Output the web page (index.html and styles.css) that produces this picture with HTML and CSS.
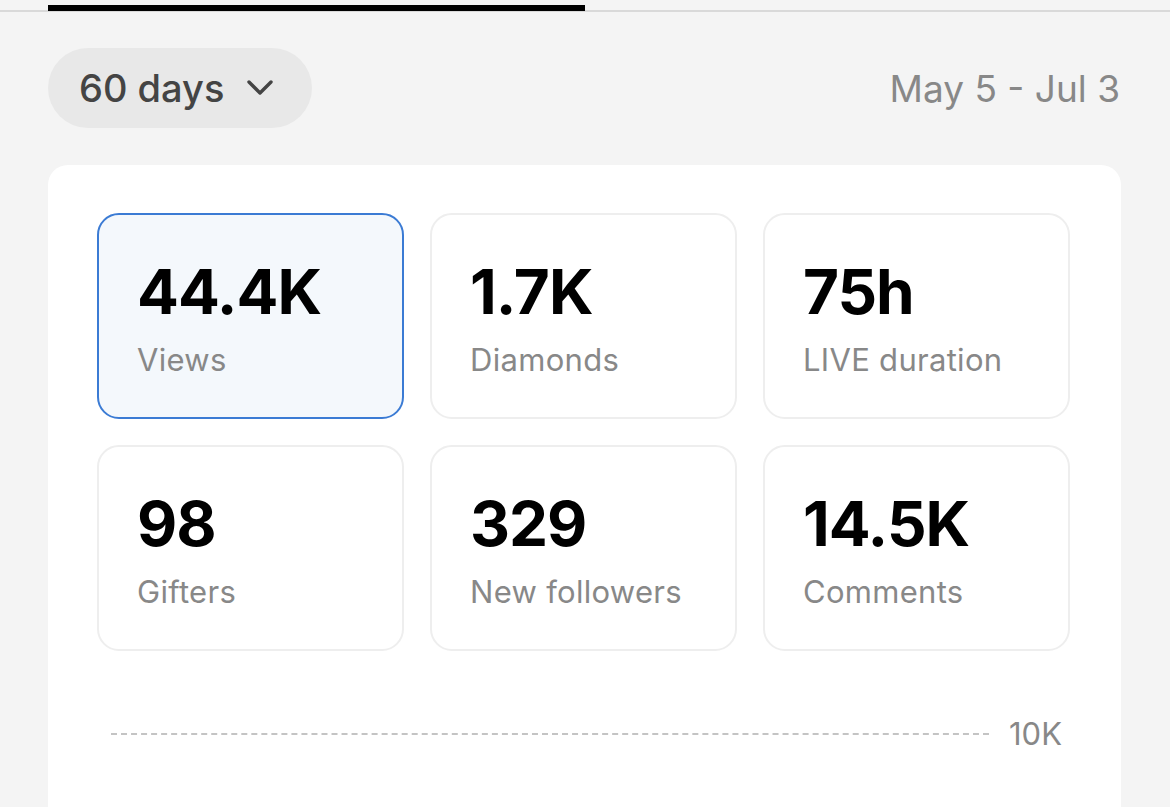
FILE: index.html
```html
<!DOCTYPE html>
<html lang="en">
<head>
  <meta charset="UTF-8">
  <meta name="viewport" content="width=device-width, initial-scale=1.0">
  <title>LIVE Analytics</title>
  <link rel="stylesheet" href="styles.css">
</head>
<body>
  <div class="tabs">
    <div class="tab-active"></div>
  </div>

  <div class="toolbar">
    <button class="range">
      60 days
      <svg width="30" height="30" viewBox="0 0 30 30"><path d="M4 9 L15 20 L26 9" fill="none" stroke="#444" stroke-width="3.4" stroke-linecap="round" stroke-linejoin="round"/></svg>
    </button>
    <span class="dates">May 5 - Jul 3</span>
  </div>

  <div class="panel">
    <div class="stats">
      <div class="stat selected">
        <div class="value">44.4K</div>
        <div class="label">Views</div>
      </div>
      <div class="stat">
        <div class="value">1.7K</div>
        <div class="label">Diamonds</div>
      </div>
      <div class="stat">
        <div class="value">75h</div>
        <div class="label">LIVE duration</div>
      </div>
      <div class="stat">
        <div class="value">98</div>
        <div class="label">Gifters</div>
      </div>
      <div class="stat">
        <div class="value">329</div>
        <div class="label">New followers</div>
      </div>
      <div class="stat">
        <div class="value">14.5K</div>
        <div class="label">Comments</div>
      </div>
    </div>

    <div class="chart">
      <div class="gridline"></div>
      <span class="axis">10K</span>
    </div>
  </div>
</body>
</html>
```
FILE: styles.css
```css
body {
  font-family: Inter, "Noto Sans", sans-serif;
  margin: 0;
  padding: 0;
  background-color: #f4f4f4;
  height: 807px;
  overflow: hidden;
}
.tabs {
  height: 10px;
  border-bottom: 2px solid #d9d9d9;
  padding: 0 48px;
  position: relative;
}
.tab-active {
  position: absolute;
  left: 48px;
  top: 5px;
  width: 537px;
  height: 6px;
  background-color: #000;
}
.toolbar {
  display: flex;
  justify-content: space-between;
  align-items: center;
  padding: 36px 50px 0 48px;
}
.range {
  display: flex;
  align-items: center;
  gap: 21px;
  height: 80px;
  padding: 0 37px 0 31px;
  border: none;
  border-radius: 40px;
  background-color: #e8e8e8;
  font-family: inherit;
  font-size: 38px;
  font-weight: 500;
  color: #444;
}
.dates {
  font-size: 37px;
  color: #888;
}
.panel {
  box-sizing: border-box;
  margin: 37px 49px 0 48px;
  background-color: #fff;
  border-radius: 20px 20px 0 0;
  padding: 48px 51px 0 49px;
  height: 642px;
}
.stats {
  display: grid;
  grid-template-columns: repeat(3, 1fr);
  gap: 26px;
}
.stat {
  box-sizing: border-box;
  height: 206px;
  border: 2px solid #eeeeee;
  border-radius: 22px;
  padding: 40px 38px 0;
}
.stat.selected {
  border-color: #3b7bd4;
  background-color: #f4f8fc;
}
.value {
  font-size: 62px;
  font-weight: 700;
  color: #000;
  letter-spacing: -1px;
  line-height: 74px;
}
.label {
  margin-top: 11px;
  font-size: 31px;
  color: #888;
  line-height: 40px;
  letter-spacing: 0.3px;
}
.chart {
  display: flex;
  align-items: center;
  gap: 20px;
  margin-top: 64px;
  padding: 0 8px 0 14px;
}
.gridline {
  flex: 1;
  border-top: 2px dashed #c4c4c4;
}
.axis {
  font-size: 31px;
  color: #888;
}
```
